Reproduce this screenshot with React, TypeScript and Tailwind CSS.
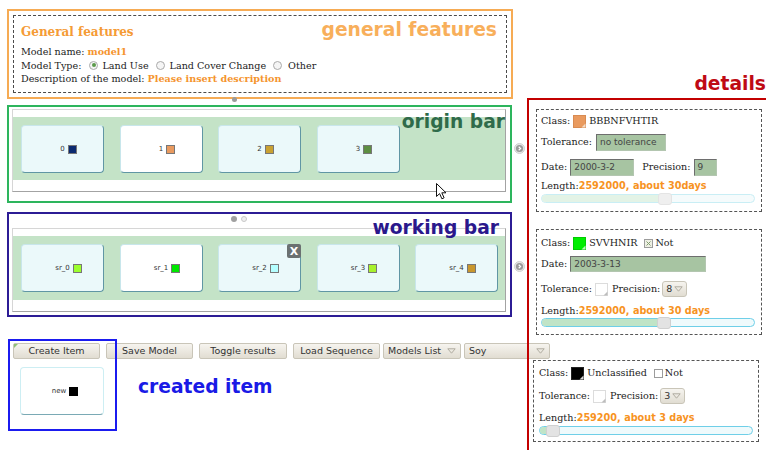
import React from "react";

const SERIF = "font-['DejaVu_Serif',serif]";
const SANS = "font-['DejaVu_Sans',sans-serif]";
const HEAD = "font-['DejaVu_Sans',sans-serif] font-bold text-[18.7px] whitespace-nowrap";

type TileSpec = { label: string; swatch: string; plain?: boolean; close?: boolean };

const originTiles: TileSpec[] = [
  { label: "0", swatch: "bg-[#0b2a6f]" },
  { label: "1", swatch: "bg-[#e99a5f]", plain: true },
  { label: "2", swatch: "bg-[#c9a132]" },
  { label: "3", swatch: "bg-[#5d8f42]" },
];

const workTiles: TileSpec[] = [
  { label: "sr_0", swatch: "bg-[#9cff2e]" },
  { label: "sr_1", swatch: "bg-[#00e800]", plain: true },
  { label: "sr_2", swatch: "bg-[#b4ffff]", close: true },
  { label: "sr_3", swatch: "bg-[#a8f22c]" },
  { label: "sr_4", swatch: "bg-[#c9972d]" },
];

function Tile({ label, swatch, plain, close }: TileSpec) {
  return (
    <div
      className={`relative flex h-[48px] w-[83px] shrink-0 items-center justify-center rounded-[4px] border border-[#c8e6eb] border-b-[#6096a4] border-r-[#6096a4] pl-[12px] ${
        plain ? "bg-white" : "bg-[#ebf9fa]"
      }`}
    >
      <span className={`${SANS} text-[7px] leading-none text-[#333]`}>{label}</span>
      <span className={`ml-[3px] h-[9px] w-[9px] border border-[#777] ${swatch}`} />
      {close && (
        <span
          className={`absolute right-[-1px] top-[-1px] flex h-[14px] w-[14px] items-center justify-center rounded-[2px] bg-[#6b7171] ${SANS} text-[11px] font-bold leading-none text-white`}
        >
          X
        </span>
      )}
    </div>
  );
}

function Strip({ tiles, tall }: { tiles: TileSpec[]; tall?: boolean }) {
  return (
    <div
      className={`border border-[#d6d6d6] border-b-[#a3a3a3] border-r-[#a3a3a3] bg-white ${
        tall ? "h-[84px]" : "h-[83px]"
      }`}
    >
      <div className={`mt-[7px] flex gap-[15.5px] bg-[#c4e3c7] pl-[8px] pt-[8px] ${tall ? "pb-[8px]" : "pb-[7px]"}`}>
        {tiles.map((t) => (
          <Tile key={t.label} {...t} />
        ))}
      </div>
    </div>
  );
}

function Nudge({ className }: { className: string }) {
  return (
    <svg width="11" height="11" viewBox="0 0 11 11" className={`absolute right-[-15px] ${className}`}>
      <circle cx="5.5" cy="5.5" r="5" fill="#e6e6e6" stroke="#d0d0d0" />
      <circle cx="5.5" cy="5.5" r="3.6" fill="#9a9a9a" />
      <path d="M4.7 3.7 L6.6 5.5 L4.7 7.3" stroke="#fff" strokeWidth="1.2" fill="none" />
    </svg>
  );
}

function Radio({ on }: { on?: boolean }) {
  return (
    <span className="flex h-[9px] w-[9px] items-center justify-center rounded-full border border-[#aaa] bg-[#f5f5f5]">
      {on && <span className="h-[4px] w-[4px] rounded-full bg-[#5b9a4a]" />}
    </span>
  );
}

function GeneralFeatures() {
  return (
    <section className="relative h-[90px] w-[506px] border-2 border-[#f6ab54] p-[4px]">
      <div className="h-full border border-dashed border-[#4a4a4a] pl-[7px] pr-[9px] pt-[7px]">
        <div className="flex items-baseline justify-between">
          <h2 className="text-[12px] font-bold leading-[14px] text-[#f59b36]">General features</h2>
          <span className={`${HEAD} leading-[14px] text-[#f8af5b]`}>general features</span>
        </div>
        <div className="mt-[6px] text-[9.6px] leading-[13.5px]">
          <div>
            Model name: <b className="text-[#f5942e]">model1</b>
          </div>
          <div className="flex h-[13.5px] items-center">
            <span>Model Type:</span>
            <span className="ml-[8px]">
              <Radio on />
            </span>
            <span className="ml-[4px]">Land Use</span>
            <span className="ml-[7px]">
              <Radio />
            </span>
            <span className="ml-[5px]">Land Cover Change</span>
            <span className="ml-[7px]">
              <Radio />
            </span>
            <span className="ml-[6px]">Other</span>
          </div>
          <div>
            Description of the model: <b className="text-[#f5942e]">Please insert description</b>
          </div>
        </div>
      </div>
      <span className="absolute bottom-[-4.5px] left-[222.5px] h-[5px] w-[5px] rounded-full bg-[#9b9b9b]" />
    </section>
  );
}

function OriginBar() {
  return (
    <section className="relative mt-[6px] h-[98px] w-[505px] border-2 border-[#2db55d] pl-[3px] pr-[4px] pt-[2px]">
      <Strip tiles={originTiles} />
      <span className={`absolute right-[5px] top-[6px] ${HEAD} leading-none text-[#2f6b4a]`}>origin bar</span>
      <Nudge className="top-[36px]" />
    </section>
  );
}

function WorkingBar() {
  return (
    <section className="relative mt-[9px] h-[105px] w-[505px] border-2 border-[#2c1c95] pl-[3px] pr-[4px] pt-[2px]">
      <div className="flex h-[6px] gap-[4px] pl-[219px]">
        <span className="h-[6px] w-[6px] rounded-full bg-[#a0a0a0]" />
        <span className="h-[6px] w-[6px] rounded-full border border-[#c8c8c8] bg-[#efefef]" />
      </div>
      <div className="mt-[6px]">
        <Strip tiles={workTiles} tall />
      </div>
      <span className={`absolute right-[11px] top-[5px] ${HEAD} leading-none text-[#2a188c]`}>working bar</span>
      <Nudge className="top-[47px]" />
    </section>
  );
}

function DownTri() {
  return (
    <svg width="9" height="6" viewBox="0 0 9 6" className="shrink-0">
      <path d="M0.8 0.8 H8.2 L4.5 5.2 Z" fill="none" stroke="#b0aca0" strokeWidth="1" />
    </svg>
  );
}

function Btn({ children, className, corner }: { children: React.ReactNode; className: string; corner?: boolean }) {
  return (
    <div
      className={`relative flex h-[16px] shrink-0 items-center justify-center rounded-[2px] border border-[#c9c5b8] bg-linear-to-b from-[#f6f4ef] to-[#e1ddd2] ${SANS} text-[9.5px] leading-none text-[#333] ${className}`}
    >
      {corner && (
        <svg width="4" height="4" viewBox="0 0 4 4" className="absolute left-0 top-0">
          <path d="M0 0 H4 L0 4 Z" fill="#8fbf7a" />
        </svg>
      )}
      {children}
    </div>
  );
}

function Drop({ children, className }: { children: React.ReactNode; className: string }) {
  return (
    <div
      className={`flex h-[16px] shrink-0 items-center justify-between rounded-[2px] border border-[#c9c5b8] bg-linear-to-b from-[#f6f4ef] to-[#e1ddd2] pl-[4px] pr-[4px] ${SANS} text-[9.5px] leading-none text-[#333] ${className}`}
    >
      <span>{children}</span>
      <DownTri />
    </div>
  );
}

function Toolbar() {
  return (
    <section className="relative mt-[26px]">
      <div className="flex items-center pl-[6px]">
        <Btn className="w-[87px]" corner>
          Create Item
        </Btn>
        <Btn className="ml-[6px] w-[87px]">Save Model</Btn>
        <Btn className="ml-[6px] w-[88px]">Toggle results</Btn>
        <Btn className="ml-[6px] w-[87px]">Load Sequence</Btn>
        <Drop className="ml-[3px] w-[78px]">Models List</Drop>
        <Drop className="ml-[3px] w-[86px]">Soy</Drop>
      </div>
      <div className="mt-[8px] flex items-start pl-[13px]">
        <div className="flex h-[48px] w-[84px] shrink-0 items-center justify-center rounded-[4px] border border-[#cdeef3] border-b-[#7aaab5] bg-white pl-[6px]">
          <span className={`${SANS} text-[7px] leading-none text-[#333]`}>new</span>
          <span className="ml-[3px] h-[9px] w-[9px] bg-black" />
        </div>
        <span className={`ml-[34px] mt-[11px] ${HEAD} leading-none text-[#1a1ae6]`}>created item</span>
      </div>
      <div className="absolute left-[1px] top-[-4px] h-[92px] w-[109px] border-2 border-[#1b1bef]" />
    </section>
  );
}

function Swatch({ fill, corner, edge }: { fill: string; corner: string; edge: string }) {
  return (
    <svg width="13" height="13" viewBox="0 0 13 13" className="shrink-0">
      <rect x="0.5" y="0.5" width="12" height="12" fill={fill} stroke={edge} />
      <path d="M12.5 8.5 V12.5 H8.5 Z" fill={corner} />
    </svg>
  );
}

function Field({ children, className }: { children: React.ReactNode; className: string }) {
  return (
    <div
      className={`flex shrink-0 items-center border border-[#b3c6b0] border-l-[#6e6e6e] border-t-[#6e6e6e] bg-[#a7c4a2] pl-[3px] ${SANS} text-[9px] leading-none text-[#444] ${className}`}
    >
      {children}
    </div>
  );
}

function Picker({ value }: { value: string }) {
  return (
    <div
      className={`ml-[2px] flex h-[16px] w-[25px] shrink-0 items-center justify-between rounded-[3px] border border-[#c9c5b8] bg-linear-to-b from-[#f6f4ef] to-[#e1ddd2] pl-[3px] pr-[3px] ${SANS} text-[9.5px] leading-none text-[#333]`}
    >
      <span>{value}</span>
      <DownTri />
    </div>
  );
}

function Tick({ on }: { on?: boolean }) {
  return (
    <svg width="9" height="9" viewBox="0 0 9 9" className="shrink-0">
      <rect x="0.5" y="0.5" width="8" height="8" fill={on ? "#eef0e4" : "#fff"} stroke="#9c9c9c" />
      {on && <path d="M2.5 2.5 L6.5 6.5 M6.5 2.5 L2.5 6.5" stroke="#7f9b6c" strokeWidth="1" />}
    </svg>
  );
}

function Range({ fill, faded }: { fill: number; faded?: boolean }) {
  return (
    <div
      className={`relative h-[9px] w-[214px] shrink-0 overflow-visible rounded-full border ${
        faded ? "border-[#c9eef5] bg-[#f5fbfc]" : "border-[#6fcfe8] bg-[#effafc]"
      }`}
    >
      <div
        className={`h-full rounded-l-full ${faded ? "bg-[#e3f3e6]" : "bg-[#c0e4c7]"}`}
        style={{ width: fill }}
      />
      <div
        className={`absolute top-[-2.5px] h-[12px] w-[14px] rounded-[3px] border ${
          faded ? "border-[#e4e4e4] bg-[#efefef]" : "border-[#d0d0d0] bg-[#e3e3e3]"
        }`}
        style={{ left: fill - 8 }}
      />
    </div>
  );
}

function LengthLine({ value }: { value: string }) {
  return (
    <div className="text-[9.6px] leading-[12px]">
      Length:<b className={`${SANS} text-[9.7px] text-[#f7931f]`}>{value}</b>
    </div>
  );
}

function Details() {
  return (
    <div className="flex min-w-0 flex-1 flex-col pt-[75px]">
      <div className={`h-[18px] text-right ${HEAD} leading-none text-[#bf0a14]`}>details</div>
      <div className="relative mt-[5px] flex-1 border-l-2 border-t-2 border-[#c30000] pl-[7px] pt-[9px] text-[9.6px] text-[#222]">
        {/* first class */}
        <div className="flex h-[103px] w-[226px] flex-col border border-dashed border-[#555] pl-[4px] pt-[4px]">
          <div className="flex h-[14px] items-center">
            <span>Class:</span>
            <span className="ml-[3px]">
              <Swatch fill="#e99a5f" corner="#f4dcc6" edge="#d88b52" />
            </span>
            <span className="ml-[3px]">BBBNFVHTIR</span>
          </div>
          <div className="mt-[6px] flex h-[17px] items-center">
            <span>Tolerance:</span>
            <Field className="ml-[4px] h-[17px] w-[70px]">no tolerance</Field>
          </div>
          <div className="mt-[8px] flex h-[17px] items-center">
            <span>Date:</span>
            <Field className="ml-[3px] h-[17px] w-[64px]">2000-3-2</Field>
            <span className="ml-[8px]">Precision:</span>
            <Field className="ml-[3px] h-[17px] w-[23px]">9</Field>
          </div>
          <div className="mt-[3.5px]">
            <LengthLine value="2592000, about 30days" />
          </div>
          <div className="mt-[2.5px]">
            <Range fill={124} faded />
          </div>
        </div>

        {/* second class */}
        <div className="mt-[17px] flex h-[106px] w-[226px] flex-col border border-dashed border-[#555] pl-[4px] pt-[6px]">
          <div className="flex h-[14px] items-center">
            <span>Class:</span>
            <span className="ml-[3px]">
              <Swatch fill="#00ee00" corner="#b8f5b8" edge="#00cc00" />
            </span>
            <span className="ml-[3px]">SVVHNIR</span>
            <span className="ml-[7px]">
              <Tick on />
            </span>
            <span className="ml-[2px]">Not</span>
          </div>
          <div className="mt-[6px] flex h-[16px] items-center">
            <span>Date:</span>
            <Field className="ml-[3px] h-[16px] w-[136px]">2003-3-13</Field>
          </div>
          <div className="mt-[9px] flex h-[16px] items-center">
            <span>Tolerance:</span>
            <span className="ml-[3px]">
              <Swatch fill="#ffffff" corner="#bdbdbd" edge="#dcdcdc" />
            </span>
            <span className="ml-[4px]">Precision:</span>
            <Picker value="8" />
          </div>
          <div className="mt-[7.5px]">
            <LengthLine value="2592000, about 30 days" />
          </div>
          <div className="mt-[1.5px]">
            <Range fill={123} />
          </div>
        </div>

        {/* third class */}
        <div className="-ml-[3px] mt-[25px] flex h-[82px] w-[226px] flex-col border border-dashed border-[#555] pl-[5px] pt-[5px]">
          <div className="flex h-[14px] items-center">
            <span>Class:</span>
            <span className="ml-[3px]">
              <Swatch fill="#000000" corner="#d8d8d8" edge="#222" />
            </span>
            <span className="ml-[3px]">Unclassified</span>
            <span className="ml-[7px]">
              <Tick />
            </span>
            <span className="ml-[2px]">Not</span>
          </div>
          <div className="mt-[8px] flex h-[16px] items-center">
            <span>Tolerance:</span>
            <span className="ml-[3px]">
              <Swatch fill="#ffffff" corner="#bdbdbd" edge="#dcdcdc" />
            </span>
            <span className="ml-[4px]">Precision:</span>
            <Picker value="3" />
          </div>
          <div className="mt-[7.5px]">
            <LengthLine value="259200, about 3 days" />
          </div>
          <div className="mt-[2.5px]">
            <Range fill={14} />
          </div>
        </div>
      </div>
    </div>
  );
}

function Pointer() {
  return (
    <svg width="12" height="18" viewBox="0 0 12 18" className="absolute left-[436px] top-[183px]">
      <path
        d="M0.5 0.5 L0.5 13.5 L3.6 10.6 L5.9 15.8 L8.1 14.8 L5.8 9.8 L10 9.8 Z"
        fill="#fff"
        stroke="#111"
        strokeWidth="1"
        strokeLinejoin="round"
      />
    </svg>
  );
}

export default function App() {
  return (
    <div className={`relative flex h-[450px] w-[766px] overflow-hidden bg-white ${SERIF} text-[#222]`}>
      <div className="flex w-[527px] shrink-0 flex-col pl-[7px] pt-[9px]">
        <GeneralFeatures />
        <OriginBar />
        <WorkingBar />
        <Toolbar />
      </div>
      <Details />
      <Pointer />
    </div>
  );
}
